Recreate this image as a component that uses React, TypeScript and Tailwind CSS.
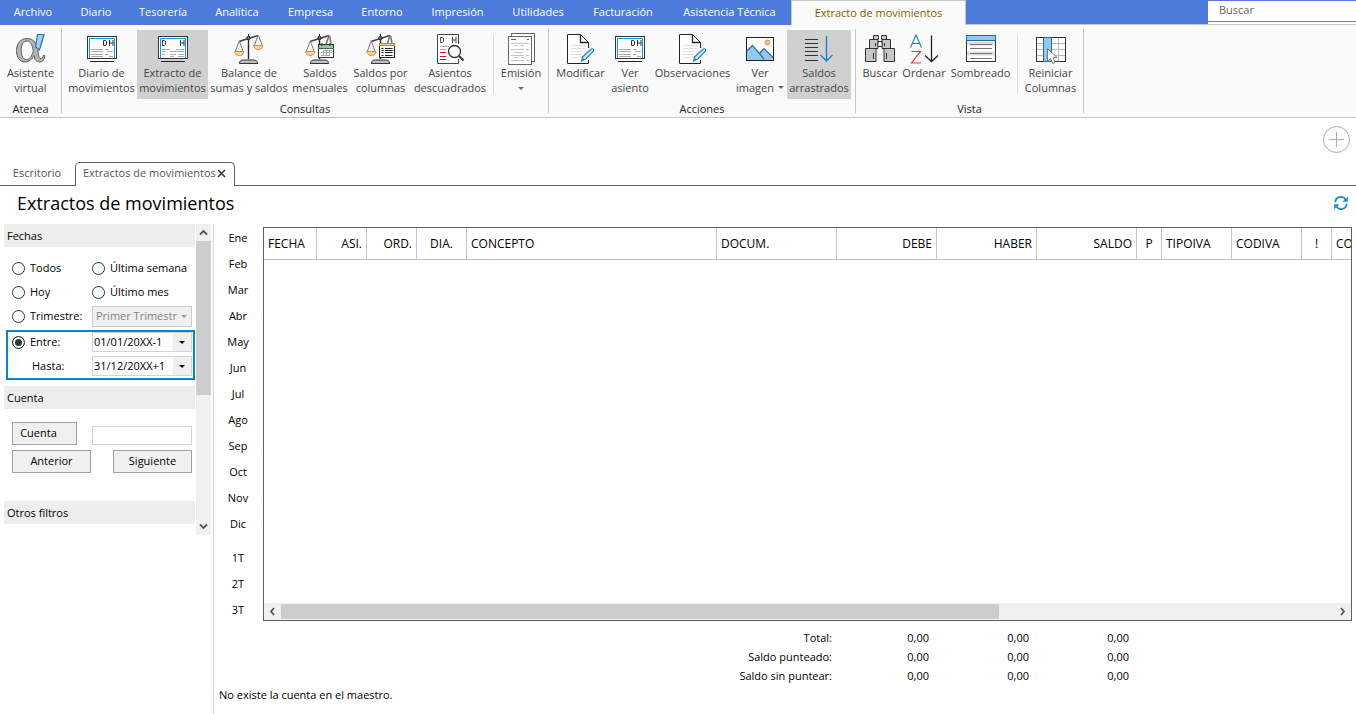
import type { ReactNode } from "react";

/* ---------- icons ---------- */

function Icon({ w = 30, children }: { w?: number; children: ReactNode }) {
  return (
    <svg width={w} height={32} viewBox={`0 -1 ${w} 32`} fill="none" aria-hidden="true" className="block">
      {children}
    </svg>
  );
}

function AlphaIcon() {
  return (
    <Icon>
      <path
        fillRule="evenodd"
        d="M11 4.500C4.500 4.500 0.500 9.500 0.500 16.500C0.500 23.500 4 28 9 28C13 28 16 25.500 18 21.500C18.700 26 20.500 28 23.500 28C26.700 28 28.500 25.500 28.800 21.500H27.300C27 23.500 26.300 24.500 25 24.500C23 24.500 22.300 21.500 22 16.500C23.500 13.500 25 9.500 26 6H22L20.500 11C18.500 6.500 15.500 4.500 11 4.500ZM11 7C14.500 7 16.500 11 17.300 17C15.500 23 13.500 25.500 10.500 25.500C7 25.500 5.200 22 5.200 16.500C5.200 10.500 7.500 7 11 7Z"
        fill="#b4b4b4"
        stroke="#5c5c5c"
      />
      <path d="M21.500 0.500h6.500l-4.500 15.500-4-3z" fill="#9fd0f2" stroke="#2271b5" strokeWidth="1.200" />
    </Icon>
  );
}

function ScreenIcon({ split = false }: { split?: boolean }) {
  return (
    <Icon>
      <rect x="0.500" y="2.500" width="29" height="22" fill="#fff" stroke="#333" />
      <path d="M2.500 24V4.500h25V24" stroke="#0a9bd8" />
      <path d="M3 27.500h24" stroke="#222" />
      <path
        d={split ? "M4.500 6.500v5M4.500 6.500h1.500l1.500 1v3l-1.500 1h-1.500M22.500 6v6M26 6v6M22.500 9h3.500" : "M16.500 6.500v5M16.500 6.500h1.500l1.500 1v3l-1.500 1h-1.500M22.500 6v6M26 6v6M22.500 9h3.500"}
        stroke="#333"
      />
      <path
        d={split ? "M4 15.500h8M18 15.500h8M4 17.500h4M12 17.500h14M4 20.500h3M12 20.500h6M20 20.500h6M12 22.500h4M20 22.500h6" : "M4 15.500h12M18 15.500h4M4 17.500h12M20 17.500h6M4 20.500h12M18 20.500h3M4 22.500h12M22 22.500h4"}
        stroke="#aaa"
      />
    </Icon>
  );
}

function Scale({ right }: { right: boolean }) {
  return (
    <>
      <path d="M14.500 4v21" stroke="#222" strokeWidth="1.400" />
      <path d="M5 7.500L24 1.500" stroke="#444" strokeWidth="1.600" />
      <circle cx="14.500" cy="4" r="1.700" fill="#777" stroke="#222" />
      <path d="M14.500 0v2" stroke="#222" />
      <path d="M5 7.500L1.500 17M5.500 7.500L9 17" stroke="#777" />
      <path d="M0.500 17.500h9.500c-.5 2.500-2 4-4.700 4s-4.300-1.500-4.800-4z" fill="#fbd5a0" stroke="#e08a3a" />
      {right && (
        <>
          <path d="M24 1.500L20.500 11M24.500 1.500L28 11" stroke="#777" />
          <path d="M19.500 11.500h9.500c-.5 2.500-2 4-4.700 4s-4.300-1.500-4.800-4z" fill="#fbd5a0" stroke="#e08a3a" />
        </>
      )}
      {!right && <path d="M24 1.500l-3 9M24.500 1.500l1.500 8" stroke="#777" strokeWidth="1.500" />}
      <path d="M5.500 29.500c0-2.500 1.500-3.500 4-3.500h10c2.500 0 4 1 4 3.500z" fill="#bfbfbf" stroke="#333" />
    </>
  );
}

function BalanceIcon() {
  return (
    <Icon>
      <Scale right />
    </Icon>
  );
}

function MonthlyIcon() {
  return (
    <Icon>
      <Scale right={false} />
      <rect x="13.500" y="10.500" width="15" height="13" fill="#fff" stroke="#333" />
      <rect x="14" y="11" width="14" height="3" fill="#8fcaa2" />
      <path d="M13 14.500h16" stroke="#3c6b4b" />
      <path d="M17 9v3M25 9v3" stroke="#333" />
      <path d="M18 16.500h9M16 18.500h11M16 21.500h9M18.500 16v6M21.500 16v6M24.500 16v6" stroke="#aaa" />
    </Icon>
  );
}

function ColumnsIcon() {
  return (
    <Icon>
      <Scale right={false} />
      <rect x="13.500" y="10.500" width="15" height="13" fill="#fff" stroke="#222" />
      <rect x="13.500" y="9.500" width="15" height="2" fill="#fbc78b" stroke="#e07b28" />
      <path d="M15.500 14.500h2M15.500 16.500h2M15.500 18.500h2M15.500 21.500h2M19 14.500h7.500M19 16.500h7.500M19 18.500h7.500M19 21.500h7.500" stroke="#222" />
    </Icon>
  );
}

function UnbalancedIcon() {
  return (
    <Icon w={27}>
      <path d="M21.500 10V0.500H0.500v29h21V25" fill="#fff" stroke="#444" />
      <path d="M3.500 3.500v5M3.500 3.500h1.500l1.500 1v3l-1.500 1h-1.500M15.500 3v6M19 3v6M15.500 6h3.500" stroke="#444" />
      <path d="M3 12.500h9M3 15.500h6" stroke="#aaa" />
      <path d="M3 18.500h6M3 22.500h6M3 25.500h6" stroke="#d9112b" />
      <circle cx="17.500" cy="17.500" r="6" fill="#fff" stroke="#333" strokeWidth="1.300" />
      <path d="M22 22l4.500 4.500" stroke="#333" strokeWidth="2" />
    </Icon>
  );
}

function PagesIcon() {
  return (
    <Icon w={27}>
      <rect x="3.500" y="-0.500" width="23" height="28" fill="#fff" stroke="#666" />
      <rect x="0.500" y="2.500" width="23" height="28" fill="#fff" stroke="#666" />
      <path d="M3 5.500h5M19 5.500h2" stroke="#666" />
      <path d="M3 9.500h18M6 11.500h4M12 11.500h4M3 15.500h13M18 15.500h3M6 18.500h9M3 21.500h13M18 21.500h3M6 23.500h5M13 23.500h3M3 26.500h13M18 26.500h3" stroke="#c4c4c4" />
    </Icon>
  );
}

function EditIcon() {
  return (
    <Icon w={28}>
      <path d="M21.500 14V8.500L13.500 0.500H0.500v29h21V26" fill="#fff" stroke="#222" />
      <path d="M13.500 0.500v8h8" stroke="#222" strokeWidth="1.300" />
      <path d="M4 11.500h14M4 14.500h14M4 17.500h13M4 20.500h11M4 23.500h9" stroke="#e0e0e0" />
      <path d="M14.500 27l1.300-4.300 8.400-7.700c1.800-.8 3 .7 2.200 2.200L18.300 25.500z" fill="#cfe8f8" stroke="#2580bf" strokeWidth="1.200" />
      <path d="M14 27.500l2-3.500 1.500 1.700z" fill="#2580bf" />
    </Icon>
  );
}

function PictureIcon() {
  return (
    <Icon w={28}>
      <rect x="0.500" y="3.500" width="27" height="23" fill="#fff" stroke="#222" />
      <circle cx="21.500" cy="8.500" r="2.400" fill="#fbc58a" stroke="#e88a35" />
      <path d="M1 17l5.500-5.500 7 8 4.500-5 9 8.500v3H1z" fill="#94c8ee" />
      <path d="M1 17l5.500-5.500L18 25M13.500 19.500l4.500-5 9 9" stroke="#2270ae" strokeWidth="1.200" />
    </Icon>
  );
}

function CarryIcon() {
  return (
    <Icon w={28}>
      <path d="M0 5.500h13M0 9.500h13M0 13.500h13M0 17.500h13M0 21.500h13M0 26.500h13" stroke="#333" />
      <path d="M21.500 2v25M15.500 21l6 6 6-6" stroke="#2580bf" strokeWidth="1.400" />
    </Icon>
  );
}

function BinocularsIcon() {
  return (
    <Icon>
      <g fill="#c6c6c6" stroke="#333">
        <path d="M8.500 5.500v-4h5v4M16.500 5.500v-4h5v4" />
        <path d="M4.500 14.500v-9h8.500v9zM17 14.500v-9h8.500v9z" />
        <path d="M0.500 27.500v-13h10.500v13zM19 27.500v-13h10.500v13z" />
        <path d="M13 7.500h4v5h-4z" fill="#fff" />
        <path d="M10.500 9v3M19.500 9v3M8.500 19v6M21.500 19v6" />
      </g>
    </Icon>
  );
}

function SortIcon() {
  return (
    <Icon w={29}>
      <path d="M0.500 13.500l5.500-12.500 5.500 12.500M2.500 9.500h7" stroke="#2580bf" strokeWidth="1.200" />
      <path d="M1.500 17.500h9L1.500 29h9.500" stroke="#e8383c" strokeWidth="1.200" />
      <path d="M21.500 1.500v26M15 21.500l6.500 6 6.500-6" stroke="#222" strokeWidth="1.300" />
    </Icon>
  );
}

function ShadingIcon() {
  return (
    <Icon>
      <rect x="0.500" y="1.500" width="29" height="26" fill="#fff" stroke="#333" />
      <path d="M1 9.500h28M1 19.500h28" stroke="#ddd" strokeWidth="4" />
      <rect x="0.500" y="1.500" width="29" height="5" fill="#94c8ee" stroke="#1e6cb0" />
      <path d="M4 10.500h22M4 14.500h22M4 19.500h22M4 24.500h22" stroke="#777" />
    </Icon>
  );
}

function ResetColumnsIcon() {
  return (
    <Icon>
      <rect x="0.500" y="3.500" width="29" height="24" fill="#fff" stroke="#333" />
      <path d="M1 9.500h28M1 15.500h28M1 21.500h28M22.500 4v23" stroke="#bbb" />
      <rect x="7.500" y="3.500" width="8" height="24" fill="#94c8ee" stroke="#1e6cb0" />
      <path d="M11.500 14.500v12.500l3-2.500 2.300 5 2.400-1.200-2.200-4.800h4z" fill="#fff" stroke="#777" />
    </Icon>
  );
}

function Caret({ className = "" }: { className?: string }) {
  return (
    <svg width="6" height="3" viewBox="0 0 6 3" className={className} aria-hidden="true">
      <path d="M0 0h6L3 3z" fill="currentColor" />
    </svg>
  );
}

function Chevron({ dir }: { dir: "up" | "down" | "left" | "right" }) {
  const paths = { up: "M1 6.500l3.500-3.500 3.500 3.500", down: "M1 2.500l3.500 3.500 3.500-3.500", left: "M6 1L3 4.500l3 3.500", right: "M3 1l3 3.500-3 3.500" };
  return (
    <svg width="9" height="9" viewBox="0 0 9 9" fill="none" aria-hidden="true">
      <path d={paths[dir]} stroke="#555" strokeWidth="1.800" />
    </svg>
  );
}

/* ---------- menu and ribbon ---------- */

const menus = [
  ["Archivo", "w-[66px]"],
  ["Diario", "w-[60px]"],
  ["Tesorería", "w-[74px]"],
  ["Analítica", "w-[74px]"],
  ["Empresa", "w-[73px]"],
  ["Entorno", "w-[70px]"],
  ["Impresión", "w-[81px]"],
  ["Utilidades", "w-[80px]"],
  ["Facturación", "w-[90px]"],
  ["Asistencia Técnica", "w-[123px]"],
];

function MenuBar() {
  return (
    <header className="flex h-[25px] bg-[#4c7bdc]">
      <nav className="flex text-[11px] text-white">
        {menus.map(([name, width]) => (
          <button key={name} className={`${width} h-[25px] shrink-0 whitespace-nowrap`}>
            {name}
          </button>
        ))}
        <button className="h-[25px] w-[175px] shrink-0 border border-b-0 border-[#c6c6c6] bg-[#fafafa] text-[#846000]">
          Extracto de movimientos
        </button>
      </nav>
      <div className="flex-1 border-b border-[#c6c6c6]" />
      <div className="mt-px w-[148px] border-b border-[#c6c6c6] bg-white">
        <input
          aria-label="Buscar"
          placeholder="Buscar"
          className="block h-[21px] w-full border-b border-[#808080] px-[11px] pb-1 text-[11px] outline-none placeholder:text-[#666]"
        />
      </div>
    </header>
  );
}

function Tool({ icon, lines, width, active, caret }: { icon: ReactNode; lines: string[]; width: string; active?: boolean; caret?: "below" | "inline" }) {
  return (
    <button
      className={`${width} ${active ? "bg-[#d0d0d0]" : ""} flex h-[69px] shrink-0 flex-col items-center whitespace-nowrap pt-[3px] text-[11px] leading-[15px] text-[#444]`}
    >
      {icon}
      <span>{lines[0]}</span>
      {lines[1] && (
        <span className="flex items-center gap-1">
          {lines[1]}
          {caret === "inline" && <Caret className="text-[#666]" />}
        </span>
      )}
      {caret === "below" && <Caret className="mt-[7px] text-[#666]" />}
    </button>
  );
}

function Group({ label, children }: { label: string; children: ReactNode }) {
  return (
    <section className="flex" aria-label={label}>
      <div className="flex flex-col pt-[5px]">
        <div className="flex px-1">{children}</div>
        <div className="pt-0.5 text-center text-[11px] leading-4 text-[#222]">{label}</div>
      </div>
      <div className="mt-1 h-[84px] w-px bg-[#c6c6c6]" />
    </section>
  );
}

function Separator() {
  return <div className="mx-1 mt-[5px] h-[59px] w-px bg-[#dcdcdc]" />;
}

function Ribbon() {
  return (
    <div className="flex h-[93px] border-b border-[#c6c6c6] bg-[#fafafa]">
      <Group label="Atenea">
        <Tool icon={<AlphaIcon />} lines={["Asistente", "virtual"]} width="w-[53px]" />
      </Group>
      <Group label="Consultas">
        <Tool icon={<ScreenIcon />} lines={["Diario de", "movimientos"]} width="w-[71px]" />
        <Tool icon={<ScreenIcon split />} lines={["Extracto de", "movimientos"]} width="w-[71px]" active />
        <Tool icon={<BalanceIcon />} lines={["Balance de", "sumas y saldos"]} width="w-[82px]" />
        <Tool icon={<MonthlyIcon />} lines={["Saldos", "mensuales"]} width="w-[60px]" />
        <Tool icon={<ColumnsIcon />} lines={["Saldos por", "columnas"]} width="w-[61px]" />
        <Tool icon={<UnbalancedIcon />} lines={["Asientos", "descuadrados"]} width="w-[78px]" />
        <Separator />
        <Tool icon={<PagesIcon />} lines={["Emisión"]} width="w-[46px]" caret="below" />
      </Group>
      <Group label="Acciones">
        <Tool icon={<EditIcon />} lines={["Modificar"]} width="w-[55px]" />
        <Tool icon={<ScreenIcon />} lines={["Ver", "asiento"]} width="w-[44px]" />
        <Tool icon={<EditIcon />} lines={["Observaciones"]} width="w-[81px]" />
        <Tool icon={<PictureIcon />} lines={["Ver", "imagen"]} width="w-[54px]" caret="inline" />
        <Tool icon={<CarryIcon />} lines={["Saldos", "arrastrados"]} width="w-[64px]" active />
      </Group>
      <Group label="Vista">
        <Tool icon={<BinocularsIcon />} lines={["Buscar"]} width="w-[40px]" />
        <Tool icon={<SortIcon />} lines={["Ordenar"]} width="w-[48px]" />
        <Tool icon={<ShadingIcon />} lines={["Sombreado"]} width="w-[65px]" />
        <Separator />
        <Tool icon={<ResetColumnsIcon />} lines={["Reiniciar", "Columnas"]} width="w-[57px]" />
      </Group>
    </div>
  );
}

/* ---------- document tabs ---------- */

function DocumentTabs() {
  return (
    <div>
      <div className="flex h-11 justify-end px-1.5 pt-2">
        <button aria-label="Añadir" className="h-[27px] w-[27px]">
          <svg width="27" height="27" viewBox="0 0 27 27" fill="none" stroke="#aaa">
            <circle cx="13.500" cy="13.500" r="13" />
            <path d="M13.500 6v15M6 13.500h15" />
          </svg>
        </button>
      </div>
      <div className="flex h-6 text-[11px] text-[#555]">
        <button className="w-[75px] border-b border-[#606060] pr-px">Escritorio</button>
        <div className="flex w-[160px] items-center justify-between rounded-t-[5px] border border-b-0 border-[#606060] pb-0.5 pl-[7px] pr-2">
          <button className="whitespace-nowrap">Extractos de movimientos</button>
          <button aria-label="Cerrar">
            <svg width="9" height="9" viewBox="0 0 9 9" stroke="#333" strokeWidth="1.500">
              <path d="M1 1l7 7M8 1L1 8" />
            </svg>
          </button>
        </div>
        <div className="flex-1 border-b border-[#606060]" />
      </div>
    </div>
  );
}

function TitleRow() {
  return (
    <div className="flex h-[38px] items-center justify-between pb-1 pl-[17px] pr-2">
      <h1 className="text-lg leading-6">Extractos de movimientos</h1>
      <button aria-label="Actualizar">
        <svg width="14" height="14" viewBox="0 0 14 14" fill="none" stroke="#1e88cf" strokeWidth="1.800">
          <path d="M1.200 6.200A5.600 5.600 0 0 1 11.500 3.500M12.800 7.800A5.600 5.600 0 0 1 2.500 10.500" />
          <path d="M13.800 0.500v5.300H8.500zM0.200 13.500V8.200h5.300z" fill="#1e88cf" stroke="none" />
        </svg>
      </button>
    </div>
  );
}

/* ---------- filters ---------- */

const radioClass =
  "h-[13px] w-[13px] shrink-0 appearance-none rounded-full border border-[#333] bg-white checked:bg-[#333] checked:shadow-[inset_0_0_0_2px_white]";
const buttonClass = "h-[23px] border border-[#a0a0a0] bg-[#f0f0f0]";

function Radio({ id, label, checked }: { id: string; label: string; checked?: boolean }) {
  return (
    <div className="flex items-center gap-[5px] whitespace-nowrap">
      <input id={id} type="radio" name="periodo" defaultChecked={checked} className={radioClass} />
      <label htmlFor={id}>{label}</label>
    </div>
  );
}

function DateBox({ id, value, label }: { id: string; value: string; label: string }) {
  return (
    <div className="flex h-5 w-[100px] border border-[#d4d4d4]">
      <input id={id} aria-label={label} defaultValue={value} className="w-20 min-w-0 bg-white pl-px outline-none" />
      <button aria-label={`Elegir fecha ${label}`} className="flex flex-1 items-center justify-center bg-[#f0f0f0] text-black">
        <Caret />
      </button>
    </div>
  );
}

function SectionHeader({ children }: { children: ReactNode }) {
  return <h2 className="h-[23px] bg-[#ededed] pl-[3px] leading-[23px]">{children}</h2>;
}

function Filters() {
  return (
    <aside className="flex w-[214px] shrink-0 border-r border-[#d4d4d4] pl-1">
      <div className="w-[191px] text-[11px]">
        <SectionHeader>Fechas</SectionHeader>
        <div className="pl-2 pt-[9px]">
          <div className="grid grid-cols-[80px_1fr] grid-rows-[24px_24px_24px] items-center">
            <Radio id="todos" label="Todos" />
            <Radio id="semana" label="Última semana" />
            <Radio id="hoy" label="Hoy" />
            <Radio id="mes" label="Último mes" />
            <Radio id="trimestre" label="Trimestre:" />
            <div className="relative w-[100px]">
              <select disabled aria-label="Trimestre" className="block h-[21px] w-full appearance-none border border-[#ccc] bg-[#f0f0f0] pl-[3px] pr-3 text-[#808080] opacity-100">
                <option>Primer Trimestr</option>
              </select>
              <Caret className="absolute right-[5px] top-[9px] text-[#999]" />
            </div>
          </div>
        </div>
        <div className="ml-0.5 mt-0.5 grid grid-cols-[80px_1fr] items-center gap-y-1 border-2 border-[#0a84c6] pb-0.5 pl-1">
          <Radio id="entre" label="Entre:" checked />
          <DateBox id="desde" label="Desde" value="01/01/20XX-1" />
          <label htmlFor="hasta" className="pl-5">
            Hasta:
          </label>
          <DateBox id="hasta" label="Hasta" value="31/12/20XX+1" />
        </div>
        <div className="pt-1.5">
          <SectionHeader>Cuenta</SectionHeader>
        </div>
        <div className="flex flex-col gap-[5px] pb-7 pl-2 pr-[3px] pt-[13px]">
          <div className="flex items-end justify-between">
            <button className={`${buttonClass} w-[65px] pr-3`}>Cuenta</button>
            <input aria-label="Cuenta" className="h-[19px] w-[100px] border border-[#d4d4d4] bg-white px-1 outline-none" />
          </div>
          <div className="flex justify-between">
            <button className={`${buttonClass} w-[79px]`}>Anterior</button>
            <button className={`${buttonClass} w-[79px]`}>Siguiente</button>
          </div>
        </div>
        <SectionHeader>Otros filtros</SectionHeader>
      </div>
      <div className="ml-px flex h-[311px] w-[15px] flex-col items-center bg-[#f0f0f0]">
        <button aria-label="Subir" className="flex h-[17px] shrink-0 items-center">
          <Chevron dir="up" />
        </button>
        <div className="h-[154px] w-full bg-[#cdcdcd]" />
        <button aria-label="Bajar" className="mt-auto flex h-[17px] shrink-0 items-center">
          <Chevron dir="down" />
        </button>
      </div>
    </aside>
  );
}

/* ---------- ledger ---------- */

const months = ["Ene", "Feb", "Mar", "Abr", "May", "Jun", "Jul", "Ago", "Sep", "Oct", "Nov", "Dic"];
const quarters = ["1T", "2T", "3T"];

const columns = [
  ["FECHA", "w-[53px]", "text-left"],
  ["ASI.", "w-[50px]", "text-right"],
  ["ORD.", "w-[50px]", "text-right"],
  ["DIA.", "w-[50px]", "text-center"],
  ["CONCEPTO", "w-[250px]", "text-left"],
  ["DOCUM.", "w-[120px]", "text-left"],
  ["DEBE", "w-[100px]", "text-right"],
  ["HABER", "w-[100px]", "text-right"],
  ["SALDO", "w-[100px]", "text-right"],
  ["P", "w-[25px]", "text-center"],
  ["TIPOIVA", "w-[70px]", "text-left"],
  ["CODIVA", "w-[70px]", "text-left"],
  ["!", "w-[30px]", "text-center"],
  ["CO", "w-[400px]", "text-left"],
];

function PeriodPicker() {
  return (
    <nav className="w-[49px] shrink-0 pt-px text-[11px]">
      {months.map((m) => (
        <button key={m} className="block h-[26px] w-full pr-px">
          {m}
        </button>
      ))}
      <div className="pt-2">
        {quarters.map((q) => (
          <button key={q} className="block h-[26px] w-full pr-px">
            {q}
          </button>
        ))}
      </div>
    </nav>
  );
}

function Ledger() {
  return (
    <div className="mt-[3px] flex h-[394px] min-w-0 flex-1 flex-col overflow-hidden border border-[#606060]">
      <div className="min-h-0 flex-1 overflow-hidden">
        <table className="w-[1468px] table-fixed border-separate border-spacing-0 text-xs">
          <thead>
            <tr className="h-8">
              {columns.map(([name, width, align]) => (
                <th key={name} className={`${width} ${align} border-b border-r border-[#c4c4c4] px-1 font-normal`}>
                  {name}
                </th>
              ))}
            </tr>
          </thead>
          <tbody />
        </table>
      </div>
      <div className="flex h-[17px] shrink-0 items-center bg-[#f0f0f0]">
        <button aria-label="Desplazar a la izquierda" className="flex w-[17px] shrink-0 justify-center">
          <Chevron dir="left" />
        </button>
        <div className="flex h-[15px] flex-1">
          <div className="w-[68.2%] bg-[#cdcdcd]" />
        </div>
        <button aria-label="Desplazar a la derecha" className="flex w-[17px] shrink-0 justify-center">
          <Chevron dir="right" />
        </button>
      </div>
    </div>
  );
}

function Totals() {
  return (
    <table className="ml-[49px] mt-1.5 w-[866px] table-fixed text-right text-[11px] leading-[17px]">
      <tbody>
        {["Total:", "Saldo punteado:", "Saldo sin puntear:"].map((label) => (
          <tr key={label}>
            <th scope="row" className="w-[569px] p-0 pb-0.5 font-normal">
              {label}
            </th>
            <td className="w-[97px] p-0 pb-0.5">0,00</td>
            <td className="w-[100px] p-0 pb-0.5">0,00</td>
            <td className="w-[100px] p-0 pb-0.5">0,00</td>
          </tr>
        ))}
      </tbody>
    </table>
  );
}

export default function App() {
  return (
    <div className="flex min-h-screen flex-col overflow-hidden bg-white font-['Open_Sans','Noto_Sans',sans-serif] text-black">
      <MenuBar />
      <Ribbon />
      <DocumentTabs />
      <TitleRow />
      <div className="flex flex-1">
        <Filters />
        <main className="min-w-0 flex-1">
          <div className="flex pr-1">
            <PeriodPicker />
            <Ledger />
          </div>
          <Totals />
          <p className="pl-[5px] text-[11px] leading-[17px]">No existe la cuenta en el maestro.</p>
        </main>
      </div>
    </div>
  );
}
